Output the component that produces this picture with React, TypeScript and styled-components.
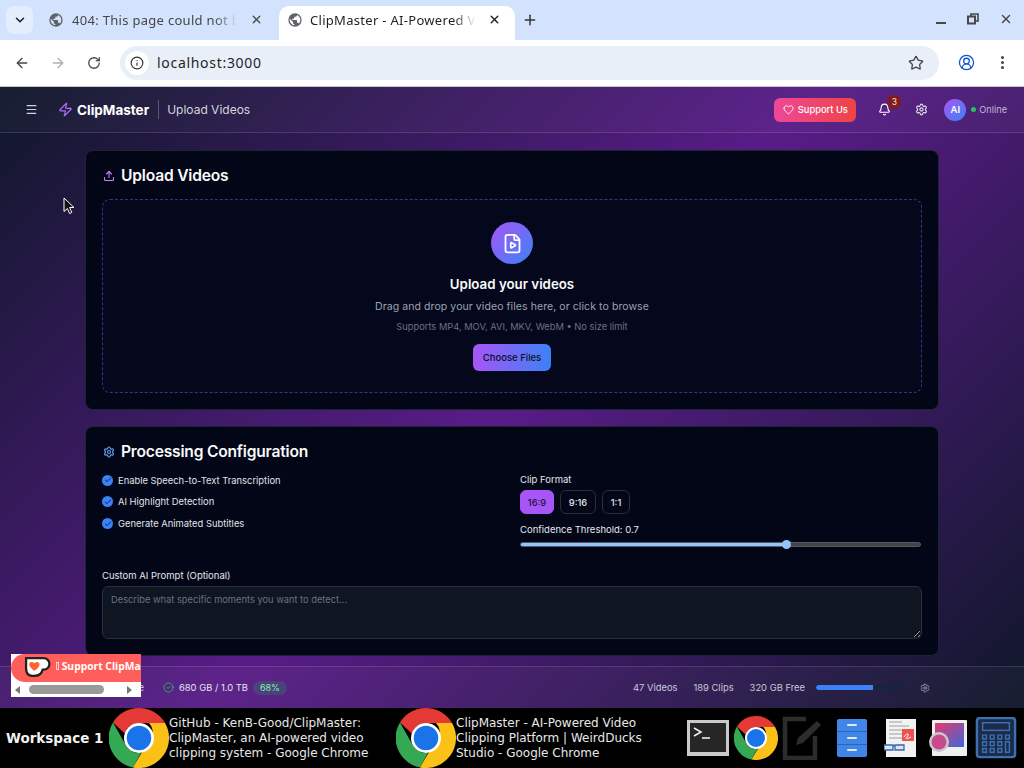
import styled, { createGlobalStyle } from 'styled-components'
import {
    ArrowLeft,
    ArrowRight,
    Bell,
    Check,
    ChevronDown,
    CircleCheck,
    CircleUserRound,
    EllipsisVertical,
    FileVideo,
    Heart,
    Info,
    Menu,
    Plus,
    RotateCw,
    Settings,
    Star,
    Upload,
    X,
    Zap,
} from 'lucide-react'

const GlobalStyle = createGlobalStyle`
    * { box-sizing: border-box; }
    html, body { margin: 0; height: 100%; overflow: hidden; }
    body { font-family: Inter, "Liberation Sans", sans-serif; }
`

const Screen = styled.div`
    position: relative;
    width: 1024px;
    height: 768px;
    display: flex;
    flex-direction: column;
    overflow: hidden;
`

// browser chrome
const TabStrip = styled.div`
    height: 40px;
    background: #d3e3fd;
    display: flex;
    align-items: flex-start;
    padding: 6px 0 0 6px;
    font-family: "Noto Sans", sans-serif;
`

const TabMenu = styled.div`
    width: 27px;
    height: 28px;
    border-radius: 8px;
    background: #e4edfc;
    display: flex;
    align-items: center;
    justify-content: center;
    color: #1f1f1f;
`

const Tab = styled.div<{ $active?: boolean }>`
    width: 236px;
    height: 34px;
    margin-left: ${({ $active }) => ($active ? '4px' : '6px')};
    padding: 0 ${({ $active }) => ($active ? '14px' : '12px')} 7px ${({ $active }) => ($active ? '8px' : '9px')};
    display: flex;
    align-items: center;
    gap: ${({ $active }) => ($active ? '7px' : '8px')};
    border-radius: 10px 10px 0 0;
    background: ${({ $active }) => ($active ? '#ffffff' : 'transparent')};
    color: ${({ $active }) => ($active ? '#1f1f1f' : '#474747')};
    font-size: 13px;
    letter-spacing: 0.3px;
`

const TabTitle = styled.span`
    flex: 1;
    white-space: nowrap;
    overflow: hidden;
    mask-image: linear-gradient(to right, #000 84%, transparent 97%);
`

const NewTab = styled.div`
    margin: 6px 0 0 7px;
    color: #333;
    display: flex;
`

const WindowControls = styled.div`
    margin-left: auto;
    display: flex;
    align-items: center;
    gap: 20px;
    padding: 6px 11px 0 0;
    color: #474747;
`

const Toolbar = styled.div`
    height: 47px;
    background: #ffffff;
    border-radius: 10px 10px 0 0;
    border-bottom: 1px solid #c8c8c8;
    display: flex;
    align-items: center;
    padding: 0 13px 1px 14px;
    color: #474747;
`

const NavButton = styled.div<{ $muted?: boolean }>`
    width: 16px;
    margin-right: 20px;
    display: flex;
    color: ${({ $muted }) => ($muted ? '#b0b0b0' : '#474747')};
`

const ReloadButton = styled(NavButton)`
    margin-left: 1px;
    margin-right: 19px;
`

const Omnibox = styled.div`
    width: 819px;
    height: 34px;
    margin-left: -2px;
    border-radius: 17px;
    background: #e9eff9;
    display: flex;
    align-items: center;
    padding: 0 15px 0 5px;
`

const SiteInfo = styled.div`
    width: 24px;
    height: 24px;
    border-radius: 50%;
    background: #ffffff;
    display: flex;
    align-items: center;
    justify-content: center;
    color: #333;
`

const Address = styled.span`
    flex: 1;
    margin-left: 8px;
    font-family: "Noto Sans", sans-serif;
    font-size: 14px;
    letter-spacing: 0.7px;
    color: #1f1f1f;
`

const ToolbarEnd = styled.div`
    margin-left: auto;
    display: flex;
    align-items: center;
    gap: 19px;
`

// app
const AppFrame = styled.div`
    flex: 1;
    min-height: 0;
    display: flex;
    flex-direction: column;
    background: linear-gradient(135deg, #0f172a 0%, #581c87 50%, #0f172a 100%);
`

const Header = styled.header`
    height: 46px;
    flex: none;
    display: flex;
    align-items: center;
    padding: 0 17px 0 25px;
    background: rgba(255, 255, 255, 0.03);
    border-bottom: 1px solid rgba(255, 255, 255, 0.12);
    color: #ffffff;
`

const Brand = styled.div`
    display: flex;
    align-items: center;
    margin-left: 20px;
    gap: 4px;
    font-size: 13.5px;
    font-weight: 700;
`

const PageName = styled.div`
    margin: -1px 0 0 9px;
    padding-left: 8px;
    border-left: 1px solid rgba(255, 255, 255, 0.25);
    font-size: 12px;
    line-height: 19px;
    color: #d1d5db;
`

const HeaderEnd = styled.div`
    margin-left: auto;
    display: flex;
    align-items: center;
`

const SupportButton = styled.div`
    width: 82px;
    height: 24px;
    border-radius: 6px;
    background: linear-gradient(90deg, #ec4899, #ef4444);
    display: flex;
    align-items: center;
    justify-content: center;
    gap: 4px;
    font-size: 9.3px;
    font-weight: 500;
    color: #fff;
`

const BellWrap = styled.div`
    position: relative;
    display: flex;
    margin-left: 22px;
`

const Badge = styled.span`
    position: absolute;
    top: -8px;
    right: -10px;
    width: 14px;
    height: 14px;
    border-radius: 50%;
    background: #7f1d1d;
    font-size: 8.5px;
    line-height: 14px;
    text-align: center;
    color: #f3dcdc;
`

const HeaderGear = styled.div`
    display: flex;
    margin: 0 16px 0 24px;
    color: #e5e7eb;
`

const Avatar = styled.div`
    width: 22px;
    height: 22px;
    border-radius: 50%;
    background: linear-gradient(135deg, #a855f7, #3b82f6);
    display: flex;
    align-items: center;
    justify-content: center;
    font-size: 9.5px;
    font-weight: 600;
`

const OnlineDot = styled.span`
    width: 5px;
    height: 5px;
    margin: 0 3px 0 5px;
    border-radius: 50%;
    background: #22c55e;
`

const OnlineLabel = styled.span`
    font-size: 9.2px;
    color: #c4b5d8;
`

const Main = styled.main`
    flex: 1;
    min-height: 0;
    padding-top: 17px;
    display: flex;
    flex-direction: column;
    align-items: center;
    gap: 16px;
    overflow: hidden;
`

const Card = styled.section<{ $height: number }>`
    width: 854px;
    height: ${({ $height }) => $height}px;
    flex: none;
    padding: 14px 16px 0;
    border-radius: 8px;
    background: #020617;
    border: 1px solid #1f2433;
`

const CardTitle = styled.h2`
    margin: 0;
    height: 21px;
    display: flex;
    align-items: center;
    gap: 6px;
    padding-left: 1px;
    font-size: 15.6px;
    font-weight: 600;
    letter-spacing: -0.2px;
    color: #f9fafb;
`

const DropZone = styled.div`
    height: 194px;
    margin-top: 13px;
    padding-top: 22px;
    border: 1px dashed #4c2a82;
    border-radius: 8px;
    background: #05071d;
    display: flex;
    flex-direction: column;
    align-items: center;
`

const UploadCircle = styled.div`
    width: 42px;
    height: 42px;
    border-radius: 50%;
    background: linear-gradient(135deg, #a855f7, #3b82f6);
    display: flex;
    align-items: center;
    justify-content: center;
    color: #fff;
`

const DropTitle = styled.div`
    margin-top: 11px;
    font-size: 13.3px;
    line-height: 18px;
    font-weight: 600;
    color: #f9fafb;
`

const DropText = styled.div`
    margin-top: 6px;
    font-size: 10.5px;
    line-height: 16px;
    color: #9ca3af;
    letter-spacing: 0.08px;
`

const DropHint = styled.div`
    margin-top: 5px;
    font-size: 9.3px;
    line-height: 14px;
    color: #6b7280;
`

const ChooseButton = styled.div`
    width: 78px;
    height: 27px;
    margin-top: 10px;
    border-radius: 6px;
    background: linear-gradient(90deg, #a855f7, #3b82f6);
    display: flex;
    align-items: center;
    justify-content: center;
    font-size: 9.5px;
    font-weight: 500;
    color: #0b1020;
`

const ConfigGrid = styled.div`
    margin-top: 11px;
    display: grid;
    grid-template-columns: 418px 1fr;
`

const Options = styled.div`
    display: flex;
    flex-direction: column;
    gap: 10.8px;
    padding-top: 1.5px;
`

const Option = styled.div`
    display: flex;
    align-items: center;
    gap: 5px;
    height: 11px;
    font-size: 9.4px;
    font-weight: 400;
    color: #e1e4ea;
`

const CheckDot = styled.span`
    width: 11px;
    height: 11px;
    border-radius: 50%;
    background: #3b82f6;
    display: flex;
    align-items: center;
    justify-content: center;
    color: #0b1020;
`

const FieldLabel = styled.div`
    font-size: 9.5px;
    line-height: 14px;
    font-weight: 400;
    color: #e5e7eb;
`

const Formats = styled.div`
    display: flex;
    gap: 6px;
    margin-top: 3px;
`

const FormatButton = styled.div<{ $active?: boolean; $width: number }>`
    width: ${({ $width }) => $width}px;
    height: 24px;
    border-radius: 6px;
    border: 1px solid ${({ $active }) => ($active ? '#a855f7' : '#2a2f3d')};
    background: ${({ $active }) => ($active ? '#a855f7' : 'transparent')};
    color: ${({ $active }) => ($active ? '#1e1245' : '#e5e7eb')};
    display: flex;
    align-items: center;
    justify-content: center;
    font-size: 9.3px;
    font-weight: 500;
`

const ThresholdLabel = styled(FieldLabel)`
    margin-top: 9px;
`

const SliderTrack = styled.div`
    position: relative;
    width: 401px;
    height: 5px;
    margin-top: 5px;
    border-radius: 3px;
    border: 1px solid #555b66;
    background: #444;
`

const SliderFill = styled.div`
    height: 100%;
    border-radius: 2px;
    background: #93c5fd;
`

const SliderThumb = styled.span`
    position: absolute;
    top: -3px;
    width: 9px;
    height: 9px;
    margin-left: -4.5px;
    border-radius: 50%;
    background: #93c5fd;
`

const PromptLabel = styled(FieldLabel)`
    margin-top: 22px;
`

const PromptBox = styled.textarea`
    display: block;
    width: 820px;
    height: 53px;
    margin-top: 3px;
    padding: 7px 8px;
    border: 1px solid #2a2f3d;
    border-radius: 6px;
    background: #0f1521;
    color: #e5e7eb;
    font-family: inherit;
    font-size: 9.3px;
    outline: none;

    &::placeholder {
        color: #6b7280;
    }
`

const StatusBar = styled.footer`
    height: 42px;
    flex: none;
    display: flex;
    align-items: center;
    padding: 0 94px 0 0;
    background: rgba(255, 255, 255, 0.03);
    border-top: 1px solid rgba(255, 255, 255, 0.12);
    font-size: 9.4px;
    color: #d1d5db;
`

const HiddenStatus = styled.span`
    width: 144px;
    text-align: right;
    white-space: nowrap;
`

const DiskUsage = styled.div`
    margin-left: 19px;
    display: flex;
    align-items: center;
    gap: 5px;
    color: #e5e7eb;
`

const UsagePill = styled.span`
    height: 14px;
    padding: 0 7px;
    border-radius: 7px;
    background: rgba(66, 84, 115, 0.65);
    color: #86efac;
    line-height: 14px;
    font-size: 9px;
`

const Stats = styled.div`
    margin-left: auto;
    display: flex;
    align-items: center;
    gap: 16px;
    color: #c7c9d6;
`

const UsageBar = styled.div`
    width: 88px;
    height: 5px;
    margin-left: -5px;
    border-radius: 3px;
    background: rgba(15, 40, 60, 0.55);
    overflow: hidden;
`

const UsageFill = styled.div`
    height: 100%;
    border-radius: 3px 0 0 3px;
    background: #3b82f6;
`

// ko-fi widget lying over the page
const KofiWidget = styled.div`
    position: absolute;
    left: 11px;
    top: 654px;
    width: 130px;
    height: 43px;
    background: #ffffff;
    overflow: hidden;
`

const KofiPill = styled.div`
    width: 150px;
    height: 28px;
    padding: 0 0 4px 13px;
    background: #ff5e5b;
    border-radius: 14px 0 0 14px;
    display: flex;
    align-items: center;
    font-family: "Open Sans", "Noto Sans", sans-serif;
    font-size: 10.3px;
    font-weight: 700;
    color: #fff;
    white-space: nowrap;
`

const KofiTofu = styled.span`
    width: 4px;
    height: 8px;
    margin: 0 3px 0 5px;
    border: 1px solid #ffd0cf;
`

const KofiScrollbar = styled.div`
    height: 15px;
    display: flex;
    align-items: center;
    padding: 0 5px 0 4px;
`

const ScrollArrow = styled.span<{ $right?: boolean }>`
    width: 0;
    height: 0;
    flex: none;
    border-top: 4.5px solid transparent;
    border-bottom: 4.5px solid transparent;
    ${({ $right }) =>
        $right ? 'border-left: 5px solid #777; margin-left: 23px;' : 'border-right: 5px solid #777;'}
`

const ScrollThumb = styled.span`
    width: 75px;
    height: 9px;
    flex: none;
    margin-left: 9px;
    border-radius: 5px;
    background: #999;
`

const CursorMark = styled.svg`
    position: absolute;
    left: 63px;
    top: 197px;
`

// desktop panel
const Taskbar = styled.div`
    height: 60px;
    flex: none;
    background: #000;
    display: flex;
    align-items: center;
    font-family: "DejaVu Sans", sans-serif;
    color: #e8e8e8;
`

const Workspace = styled.div`
    width: 109px;
    padding-left: 6px;
    font-size: 13.5px;
    font-weight: 700;
    white-space: nowrap;
    color: #f2f2f2;
`

const WindowItem = styled.div<{ $width: number }>`
    width: ${({ $width }) => $width}px;
    flex: none;
    display: flex;
    align-items: center;
    height: 60px;
`

const WindowTitle = styled.div`
    width: 210px;
    font-size: 12px;
    line-height: 15px;
    white-space: nowrap;
`

const Dock = styled.div`
    margin-left: auto;
    padding-right: 4px;
    display: flex;
    align-items: center;
`

const DockSlot = styled.div`
    width: 48px;
    height: 44px;
    display: flex;
    align-items: center;
    justify-content: center;
`

const globeIcon = (
    <svg width="16" height="16" viewBox="0 0 24 24" fill="#5f6368" style={{ flex: 'none' }}>
        <path d="M12 2a10 10 0 1 0 0 20 10 10 0 0 0 0-20zM4 12c0-.6.1-1.200.2-1.800L9 15v1c0 1.100.9 2 2 2v2c-3.900-.5-7-3.900-7-8zm13.900 5.400c-.3-.8-1-1.400-1.900-1.400h-1v-3c0-.6-.4-1-1-1H8v-2h2c.6 0 1-.4 1-1V7h2c1.100 0 2-.9 2-2v-.4c2.900 1.200 5 4.100 5 7.400 0 2.100-.8 4-2.100 5.400z" />
    </svg>
)

const ChromeLogo = ({ size }: { size: number }) => (
    <svg width={size} height={size} viewBox="0 0 48 48" style={{ flex: 'none' }}>
        <path fill="#e53935" d="M24 0a24 24 0 0 1 20.800 12H24a12 12 0 0 0-11.400 8.300L3.200 11.500A24 24 0 0 1 24 0z" />
        <path fill="#34a853" d="M3.200 11.500 13.600 30a12 12 0 0 0 11.900 5.900l-6.400 11.600A24 24 0 0 1 3.200 11.500z" />
        <path fill="#fbc116" d="M44.800 12A24 24 0 0 1 19.100 47.500L29.600 30a12 12 0 0 0 2.400-18z" />
        <circle cx="24" cy="24" r="12" fill="#fff" />
        <circle cx="24" cy="24" r="9.800" fill="#1a73e8" />
    </svg>
)

const TerminalIcon = () => (
    <svg width="42" height="36" viewBox="0 0 42 36">
        <rect x="0" y="0" width="42" height="36" fill="#c9c9c9" />
        <rect x="3" y="3" width="36" height="29" fill="#262626" />
        <path d="M7 8l7 4-7 4" fill="none" stroke="#eee" strokeWidth="1.600" />
        <path d="M15 18h8" stroke="#eee" strokeWidth="1.600" />
    </svg>
)

const NotepadIcon = () => (
    <svg width="44" height="44" viewBox="0 0 44 44" fill="none" stroke="#2c2c2c" strokeWidth="4.500">
        <path d="M24 3H3v39h30V20" />
        <path d="M14 29l2-7L35 5l4 4-18 18z" fill="#2c2c2c" stroke="none" />
    </svg>
)

const FilesIcon = () => (
    <svg width="30" height="38" viewBox="0 0 30 38">
        <rect x="0" y="0" width="30" height="38" rx="2" fill="#3f86e8" />
        <path d="M0 12.500h30M0 25.500h30" stroke="#2c64b8" />
        <path d="M11 6h8M11 19h8M11 31h8" stroke="#dfe9f8" strokeWidth="2" strokeLinecap="round" />
    </svg>
)

const DocIcon = () => (
    <svg width="32" height="38" viewBox="0 0 32 38">
        <rect x="2" y="0" width="30" height="38" fill="#f2f2f2" />
        <path d="M5 3h13M5 7h20M5 11h13M5 15h13M5 19h13" stroke="#bbb" strokeWidth="1.500" />
        <rect x="18" y="10" width="12" height="12" fill="#ef5350" />
        <path d="M20 18c3-5 6-3 3 0s2 1 4 0" fill="none" stroke="#fff" />
        <path d="M0 26h9v5H0zM11 26h9v5h-9zM9 27h2" fill="#dbe7f7" stroke="#3666a8" strokeWidth="1.300" />
    </svg>
)

const ImageIcon = () => (
    <svg width="38" height="36" viewBox="0 0 38 36">
        <rect x="3" y="0" width="35" height="36" rx="1" fill="#efefef" />
        <defs>
            <linearGradient id="imgGrad" x1="0" y1="0" x2="1" y2="1">
                <stop offset="0" stopColor="#e8396b" />
                <stop offset="1" stopColor="#3d68d8" />
            </linearGradient>
        </defs>
        <rect x="6" y="3" width="29" height="24" fill="url(#imgGrad)" />
        <circle cx="10" cy="22" r="10" fill="#c8c8c8" />
        <circle cx="10" cy="22" r="7.500" fill="#c94a8c" />
    </svg>
)

const CalculatorIcon = () => (
    <svg width="42" height="42" viewBox="0 0 42 44" fill="none" stroke="#3f6fae" strokeWidth="1.500">
        <rect x="1" y="1" width="40" height="41" rx="3" fill="#1a2c4a" strokeWidth="2.500" />
        <rect x="7" y="6" width="28" height="8" />
        <path d="M7 19h4v4H7zM15 19h4v4h-4zM23 19h4v4h-4zM31 19h4v4h-4zM7 26h4v4H7zM15 26h4v4h-4zM23 26h4v4h-4zM7 33h4v4H7zM15 33h4v4h-4zM23 33h4v4h-4zM31 26h4v11h-4z" />
    </svg>
)

const App = () => {
    return (
        <Screen>
            <GlobalStyle />
            <TabStrip>
                <TabMenu>
                    <ChevronDown size={14} strokeWidth={2.6} />
                </TabMenu>
                <Tab>
                    {globeIcon}
                    <TabTitle>404: This page could not be found</TabTitle>
                    <X size={13} strokeWidth={2.4} />
                </Tab>
                <Tab $active>
                    {globeIcon}
                    <TabTitle>ClipMaster - AI-Powered Video Clipping</TabTitle>
                    <X size={13} strokeWidth={2.6} />
                </Tab>
                <NewTab>
                    <Plus size={16} strokeWidth={2.2} />
                </NewTab>
                <WindowControls>
                    <svg width="12" height="12" viewBox="0 0 12 12">
                        <path d="M1 10h10" stroke="#474747" strokeWidth="2" />
                    </svg>
                    <svg width="12" height="12" viewBox="0 0 12 12" fill="none" stroke="#474747" strokeWidth="1.600">
                        <path d="M4 3V1h7v7H8" />
                        <rect x="1" y="3.500" width="7" height="7" strokeWidth="2" />
                    </svg>
                    <X size={14} strokeWidth={2.4} />
                </WindowControls>
            </TabStrip>

            <Toolbar>
                <NavButton>
                    <ArrowLeft size={16} strokeWidth={2} />
                </NavButton>
                <NavButton $muted>
                    <ArrowRight size={16} strokeWidth={2} />
                </NavButton>
                <ReloadButton>
                    <RotateCw size={14} strokeWidth={2.2} />
                </ReloadButton>
                <Omnibox>
                    <SiteInfo>
                        <Info size={14} strokeWidth={2} />
                    </SiteInfo>
                    <Address>localhost:3000</Address>
                    <Star size={16} strokeWidth={2} />
                </Omnibox>
                <ToolbarEnd>
                    <CircleUserRound size={17} strokeWidth={1.8} color="#0b57d0" />
                    <EllipsisVertical size={17} strokeWidth={2.4} />
                </ToolbarEnd>
            </Toolbar>

            <AppFrame>
                <Header>
                    <Menu size={13} strokeWidth={2.2} color="#d1d5db" />
                    <Brand>
                        <Zap size={15} strokeWidth={2} color="#b06cf5" />
                        ClipMaster
                    </Brand>
                    <PageName>Upload Videos</PageName>
                    <HeaderEnd>
                        <SupportButton>
                            <Heart size={11} strokeWidth={2} />
                            Support Us
                        </SupportButton>
                        <BellWrap>
                            <Bell size={13} strokeWidth={2} />
                            <Badge>3</Badge>
                        </BellWrap>
                        <HeaderGear>
                            <Settings size={13} strokeWidth={2} />
                        </HeaderGear>
                        <Avatar>AI</Avatar>
                        <OnlineDot />
                        <OnlineLabel>Online</OnlineLabel>
                    </HeaderEnd>
                </Header>

                <Main>
                    <Card $height={260}>
                        <CardTitle>
                            <Upload size={12} strokeWidth={2.2} color="#c084fc" />
                            Upload Videos
                        </CardTitle>
                        <DropZone>
                            <UploadCircle>
                                <FileVideo size={21} strokeWidth={2} />
                            </UploadCircle>
                            <DropTitle>Upload your videos</DropTitle>
                            <DropText>Drag and drop your video files here, or click to browse</DropText>
                            <DropHint>Supports MP4, MOV, AVI, MKV, WebM • No size limit</DropHint>
                            <ChooseButton>Choose Files</ChooseButton>
                        </DropZone>
                    </Card>

                    <Card $height={230}>
                        <CardTitle>
                            <Settings size={12} strokeWidth={2.2} color="#60a5fa" />
                            Processing Configuration
                        </CardTitle>
                        <ConfigGrid>
                            <Options>
                                {[
                                    'Enable Speech-to-Text Transcription',
                                    'AI Highlight Detection',
                                    'Generate Animated Subtitles',
                                ].map((label) => (
                                    <Option key={label}>
                                        <CheckDot>
                                            <Check size={8} strokeWidth={2.5} />
                                        </CheckDot>
                                        {label}
                                    </Option>
                                ))}
                            </Options>
                            <div>
                                <FieldLabel>Clip Format</FieldLabel>
                                <Formats>
                                    <FormatButton $active $width={34}>16:9</FormatButton>
                                    <FormatButton $width={36}>9:16</FormatButton>
                                    <FormatButton $width={28}>1:1</FormatButton>
                                </Formats>
                                <ThresholdLabel>Confidence Threshold: 0.7</ThresholdLabel>
                                <SliderTrack>
                                    <SliderFill style={{ width: '66.5%' }} />
                                    <SliderThumb style={{ left: '66.5%' }} />
                                </SliderTrack>
                            </div>
                        </ConfigGrid>
                        <PromptLabel>Custom AI Prompt (Optional)</PromptLabel>
                        <PromptBox placeholder="Describe what specific moments you want to detect..." />
                    </Card>
                </Main>

                <StatusBar>
                    <HiddenStatus>Active</HiddenStatus>
                    <DiskUsage>
                        <CircleCheck size={11} strokeWidth={1.8} color="#22c55e" />
                        680 GB / 1.0 TB
                        <UsagePill>68%</UsagePill>
                    </DiskUsage>
                    <Stats>
                        <span>47 Videos</span>
                        <span>189 Clips</span>
                        <span>320 GB Free</span>
                        <UsageBar>
                            <UsageFill style={{ width: '65%' }} />
                        </UsageBar>
                        <Settings size={10} strokeWidth={2} color="#9ca3af" />
                    </Stats>
                </StatusBar>
            </AppFrame>

            <Taskbar>
                <Workspace>Workspace 1</Workspace>
                <WindowItem $width={287}>
                    <ChromeLogo size={60} />
                    <WindowTitle>
                        GitHub - KenB-Good/ClipMaster:
                        <br />
                        ClipMaster, an AI-powered video
                        <br />
                        clipping system - Google Chrome
                    </WindowTitle>
                </WindowItem>
                <WindowItem $width={260}>
                    <ChromeLogo size={60} />
                    <WindowTitle>
                        ClipMaster - AI-Powered Video
                        <br />
                        Clipping Platform | WeirdDucks
                        <br />
                        Studio - Google Chrome
                    </WindowTitle>
                </WindowItem>
                <Dock>
                    <DockSlot>
                        <TerminalIcon />
                    </DockSlot>
                    <DockSlot>
                        <ChromeLogo size={44} />
                    </DockSlot>
                    <DockSlot>
                        <NotepadIcon />
                    </DockSlot>
                    <DockSlot>
                        <FilesIcon />
                    </DockSlot>
                    <DockSlot>
                        <DocIcon />
                    </DockSlot>
                    <DockSlot>
                        <ImageIcon />
                    </DockSlot>
                    <DockSlot>
                        <CalculatorIcon />
                    </DockSlot>
                </Dock>
            </Taskbar>

            <KofiWidget>
                <KofiPill>
                    <svg width="27" height="23" viewBox="0 0 26 22" style={{ flex: 'none' }}>
                        <path d="M2 3h17a5 5 0 0 1 0 11h-1c-1 4-4 6-8 6H8c-4 0-6-3-6-7z" fill="#fff" stroke="#222" strokeWidth="2.200" />
                        <path d="M10 15c-3-2-5-4-5-6 0-2.500 3.500-3 5-1 1.500-2 5-1.500 5 1 0 2-2 4-5 6z" fill="#ff6433" />
                    </svg>
                    <KofiTofu />
                    Support ClipMaster
                </KofiPill>
                <KofiScrollbar>
                    <ScrollArrow />
                    <ScrollThumb />
                    <ScrollArrow $right />
                </KofiScrollbar>
            </KofiWidget>

            <CursorMark width="12" height="18" viewBox="0 0 12 18">
                <path d="M1 1v13.500l3.400-3 2.200 5 2.200-1-2.200-5H11z" fill="#111" stroke="#fff" strokeWidth="1" />
            </CursorMark>
        </Screen>
    )
}

export default App
